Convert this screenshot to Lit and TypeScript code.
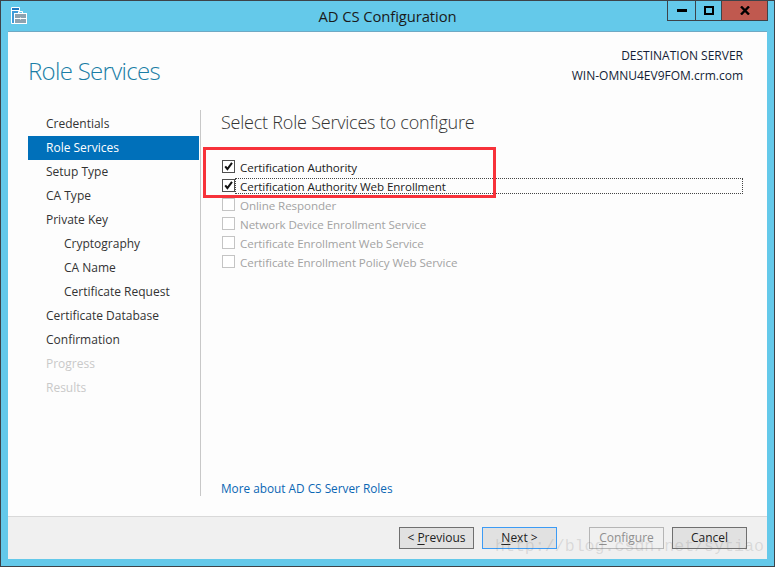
import { LitElement, html, svg, css } from "lit";
import { customElement } from "lit/decorators.js";

const NAV: [string, number, number][] = [
  ["Credentials", 0, 0], ["Role Services", 0, 1], ["Setup Type", 0, 0], ["CA Type", 0, 0],
  ["Private Key", 0, 0], ["Cryptography", 1, 0], ["CA Name", 1, 0], ["Certificate Request", 1, 0],
  ["Certificate Database", 0, 0], ["Confirmation", 0, 0], ["Progress", 0, 2], ["Results", 0, 2],
];
const OPTS: [string, boolean, boolean][] = [
  ["Certification Authority", true, false],
  ["Certification Authority Web Enrollment", true, false],
  ["Online Responder", false, true],
  ["Network Device Enrollment Service", false, true],
  ["Certificate Enrollment Web Service", false, true],
  ["Certificate Enrollment Policy Web Service", false, true],
];

@customElement("app-root")
export class AppRoot extends LitElement {
  static styles = css`
    :host { display: block; width: 775px; height: 567px; font-family: "Open Sans", "Noto Sans", sans-serif; font-size: 12px; }
    * { box-sizing: border-box; }
    .win { position: relative; width: 775px; height: 567px; background: #64c9ea; border: 1px solid #3d4349; display: flex; flex-direction: column; overflow: hidden; }
    .title { height: 30px; flex: none; display: flex; align-items: flex-start; padding-left: 9px; position: relative; }
    .ico { margin-top: 6px; display: block; }
    .title-text { position: absolute; left: 0; right: 0; top: 5px; text-align: center; font-size: 14.8px; line-height: 20px; color: #1a1a1a; letter-spacing: -0.08px; }
    .caps { margin-left: auto; margin-right: 6px; display: flex; height: 21px; margin-top: -1px; border: 1px solid #3d4349; border-top: none; }
    .cap { display: flex; align-items: center; justify-content: center; width: 28px; border-right: 1px solid #3d4349; }
    .cap.m { width: 26px; }
    .cap.x { width: 45px; border-right: none; background: #c0594f; }
    .body { margin: 0 7px; flex: 1; display: flex; flex-direction: column; background: #fdfdfd; border-top: 1px solid #6fa9c4; min-height: 0; }
    .head { height: 78px; flex: none; display: flex; justify-content: space-between; padding: 0 24px 0 20px; }
    .h1 { font-size: 24px; font-weight: 300; color: #1a7da6; line-height: 32px; margin-top: 23px; letter-spacing: -0.7px; }
    .dest { text-align: right; font-size: 12px; line-height: 20px; color: #141d36; padding-top: 14px; }
    .main { flex: 1; display: flex; min-height: 0; }
    .nav { width: 192px; flex: none; padding: 2px 0 0 20px; }
    .item { width: 171px; height: 24px; line-height: 24px; padding-left: 18px; color: #333; font-size: 12px; }
    .item.sub { padding-left: 36px; }
    .item.on { background: #0070ba; color: #fff; }
    .item.off { color: #c9c9c9; }
    .rule { width: 1px; background: #c8c8c8; flex: none; height: 386px; }
    .pane { flex: 1; display: flex; flex-direction: column; padding-left: 20px; padding-right: 24px; height: 386px; }
    .h2 { font-size: 18px; font-weight: 300; color: #333; line-height: 24px; margin: 0; letter-spacing: -0.22px; }
    .opts { margin-top: 23px; display: flex; flex-direction: column; font-size: 11.6px; letter-spacing: -0.08px; }
    .opt { height: 19px; display: flex; align-items: center; gap: 5px; color: #222; padding-left: 1px; }
    .opt.dis { color: #a3a3a3; }
    .box { width: 13px; height: 13px; border: 1px solid #4d4d4d; background: #fff; flex: none; display: block; }
    .opt.dis .box { border-color: #c4c4c4; }
    .lab { flex: 1; height: 16px; line-height: 15px; border: 1px solid transparent; margin-left: -5px; padding-left: 4px; }
    .opt.focus .lab { border: 1px dotted #444; }
    .link { margin-top: auto; color: #0a66b4; line-height: 16px; font-size: 11.8px; padding-bottom: 0; }
    .foot { height: 43px; flex: none; background: #f0f0f0; border-top: 1px solid #d9d9d9; display: flex; align-items: center; justify-content: flex-end; padding: 0 20px 0 0; gap: 8px; }
    .btn { width: 75px; height: 22px; border: 1px solid #6f6f6f; background: #e1e1e1; color: #222; font-size: 12px; line-height: 20px; text-align: center; }
    .btn.def { border-color: #3c9bf5; }
    .btn.dis { border-color: #b5b5b5; background: #f0f0f0; color: #8f8f8f; margin-left: 24px; }
    u { text-decoration-thickness: 1px; text-underline-offset: 2px; }
    .red { position: absolute; left: 202px; top: 146px; width: 293px; height: 51px; border: 3px solid #f7323a; pointer-events: none; }
    .mark { position: absolute; left: 494px; top: 536px; font-family: "Liberation Mono", monospace; font-size: 16.6px; line-height: 20px; color: rgba(120,120,120,0.2); white-space: nowrap; }
  `;

  icon() {
    return html`<svg class="ico" width="17" height="18" viewBox="0 0 17 18" fill="none" stroke="#fff">
      <rect x="1.5" y="4" width="8" height="12" fill="#3f9bd8" stroke="none" />
      <rect x="1.5" y=".5" width="8" height="3" fill="#1f78c0" stroke="none" />
      <path d="M1.5 .5h8v5M1.5 .5v16h4M1.5 3.500h8" />
      <rect x="4.500" y="6.500" width="12" height="10" fill="#8ea3b0" />
      <path d="M8.500 6.500v-2h4v2M4.500 11.500h12M10.500 10.500v2" />
    </svg>`;
  }

  check(on: boolean) {
    return html`<svg class="box" viewBox="0 0 11 11">
      ${on ? svg`<path d="M2.200 5.300 L4.400 8 L9 1.800" fill="none" stroke="#111" stroke-width="2" />` : ""}
    </svg>`;
  }

  render() {
    return html`<div class="win">
      <div class="title">
        ${this.icon()}
        <div class="title-text">AD CS Configuration</div>
        <div class="caps">
          <div class="cap"><svg width="10" height="3"><rect width="10" height="3" fill="#000" /></svg></div>
          <div class="cap m"><svg width="10" height="9" fill="none"><rect x="1" y="1" width="8" height="7" stroke="#000" stroke-width="2" /></svg></div>
          <div class="cap x"><svg width="10" height="9"><path d="M1 .5 L9 8.500 M9 .5 L1 8.500" stroke="#000" stroke-width="2.400" /></svg></div>
        </div>
      </div>
      <div class="body">
        <div class="head">
          <div class="h1">Role Services</div>
          <div class="dest"><div>DESTINATION SERVER</div><div>WIN-OMNU4EV9FOM.crm.com</div></div>
        </div>
        <div class="main">
          <div class="nav">
            ${NAV.map(([t, sub, st]) => html`<div class="item ${sub ? "sub" : ""} ${st === 1 ? "on" : st === 2 ? "off" : ""}">${t}</div>`)}
          </div>
          <div class="rule"></div>
          <div class="pane">
            <div class="h2">Select Role Services to configure</div>
            <div class="opts">
              ${OPTS.map(([t, on, dis], i) => html`<div class="opt ${dis ? "dis" : ""} ${i === 1 ? "focus" : ""}">${this.check(on)}<div class="lab">${t}</div></div>`)}
            </div>
            <div class="link">More about AD CS Server Roles</div>
          </div>
        </div>
        <div class="foot">
          <div class="btn">&lt; <u>P</u>revious</div>
          <div class="btn def"><u>N</u>ext &gt;</div>
          <div class="btn dis"><u>C</u>onfigure</div>
          <div class="btn">Cancel</div>
        </div>
      </div>
      <div style="height:7px;flex:none"></div>
      <div class="red"></div>
      <div class="mark">http://blog.csdn.net/sytiao</div>
    </div>`;
  }
}
